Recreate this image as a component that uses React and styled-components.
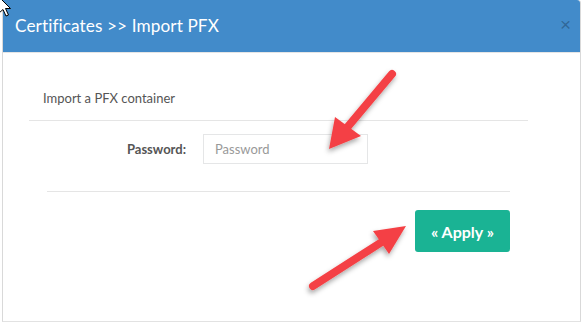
import React from "react";
import styled, { createGlobalStyle } from "styled-components";

const Global = createGlobalStyle`
  html, body { margin: 0; padding: 0; background: #fff; }
  body { font-family: Lato, "Open Sans", "Liberation Sans", sans-serif; width: 584px; height: 324px; overflow: hidden; }
  * { box-sizing: border-box; }
`;

const Page = styled.div`
  position: relative;
  width: 584px;
  height: 324px;
  padding: 0 3px 2px 2px;
  background: #fff;
`;

const Modal = styled.div`
  height: 322px;
  display: flex;
  flex-direction: column;
  border-left: 1px solid #d9d9d9;
  border-right: 1px solid #d9d9d9;
  border-bottom: 1px solid #e2e2e2;
  border-top-right-radius: 3px;
  background: #fff;
`;

const Header = styled.div`
  height: 53px;
  background: #428bca;
  border-bottom: 1px solid #e5e5e5;
  border-top-right-radius: 3px;
  display: flex;
  align-items: center;
  justify-content: space-between;
  padding: 0 9px 0 12px;
`;

const Title = styled.h4`
  margin: 0 0 1px 0;
  font-size: 17.2px;
  font-weight: 400;
  color: #fff;
  letter-spacing: 0.1px;
`;

const Close = styled.span`
  font-family: "Liberation Sans", Arial, sans-serif;
  font-size: 19px;
  line-height: 1;
  color: rgba(0, 0, 0, 0.27);
  margin-top: -3px;
`;

const Body = styled.div`
  padding: 0 0 0 26px;
  width: 525px;
`;

const Legend = styled.div`
  font-size: 13px;
  color: #555;
  padding: 37px 0 0 14px;
  height: 68px;
  border-bottom: 1px solid #e5e5e5;
`;

const FormRow = styled.div`
  display: grid;
  grid-template-columns: 174px 165px;
  align-items: center;
  margin-top: 13px;
`;

const Label = styled.label`
  font-size: 13px;
  font-weight: 700;
  color: #555;
  text-align: right;
  padding-right: 17px;
`;

const Input = styled.input`
  height: 30px;
  width: 165px;
  border: 1px solid #e5e6e7;
  padding: 0 11px;
  font-family: inherit;
  font-size: 13px;
  color: #555;
  outline: none;
  &::placeholder { color: #999; }
`;

const Footer = styled.div`
  margin: 27px 0 0 18px;
  width: 463px;
  border-top: 1px solid #e5e5e5;
  display: flex;
  justify-content: flex-end;
  padding-top: 18px;
`;

const Button = styled.button`
  width: 95px;
  height: 42px;
  border: none;
  border-radius: 3px;
  background: #1ab394;
  color: #fff;
  font-family: inherit;
  font-size: 16px;
  font-weight: 700;
`;

const Overlay = styled.svg`
  position: absolute;
  left: 0;
  top: 0;
  pointer-events: none;
`;

function Arrow({ x1, y1, x2, y2, w1, w2 }) {
  return (
    <g>
      <line x1={x1} y1={y1} x2={(w1[0] + w2[0]) / 2} y2={(w1[1] + w2[1]) / 2} stroke="#f44144" strokeWidth="8" strokeLinecap="round" />
      <polygon points={`${x2},${y2} ${w1[0]},${w1[1]} ${w2[0]},${w2[1]}`} fill="#f44144" />
    </g>
  );
}

export default function App() {
  return (
    <>
      <Global />
      <Page>
        <Modal>
          <Header>
            <Title>Certificates &gt;&gt; Import PFX</Title>
            <Close>×</Close>
          </Header>
          <Body>
            <Legend>Import a PFX container</Legend>
            <FormRow>
              <Label>Password:</Label>
              <Input placeholder="Password" />
            </FormRow>
            <Footer>
              <Button>« Apply »</Button>
            </Footer>
          </Body>
        </Modal>
        <Overlay width="584" height="324" viewBox="0 0 584 324">
          <defs>
            <filter id="sh" x="-20%" y="-20%" width="140%" height="140%">
              <feDropShadow dx="-1" dy="3" stdDeviation="2.5" floodColor="#000" floodOpacity="0.35" />
            </filter>
          </defs>
          <g filter="url(#sh)">
            <Arrow x1={392} y1={74} x2={329} y2={149} w1={[335, 117]} w2={[361, 136]} />
            <Arrow x1={313} y1={286} x2={406} y2={226} w1={[373, 231]} w2={[389, 254]} />
          </g>
          <path d="M-1 -3 L-1 13 L3 9.5 L6 16 L8.5 15 L5.5 8.5 L10.5 8.5 Z" fill="#fff" stroke="#000" strokeWidth="1" />
        </Overlay>
      </Page>
    </>
  );
}
